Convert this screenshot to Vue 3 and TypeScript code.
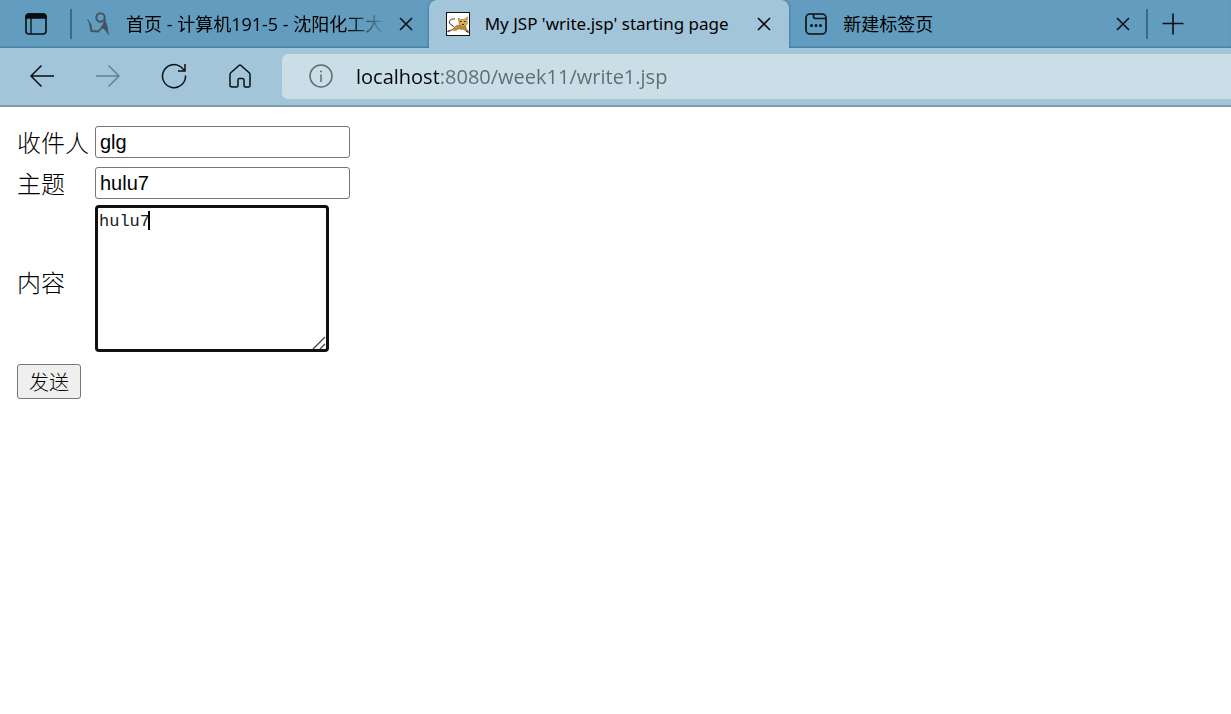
<script setup lang="ts">
import { ref } from 'vue'

const address = ref<string>('localhost:8080/week11/write1.jsp')
const recipient = ref<string>('glg')
const subject = ref<string>('hulu7')
const content = ref<string>('hulu7')
</script>

<template>
  <div class="browser">
    <header>
      <div class="tabs">
        <button class="icon-btn tab-menu" type="button" aria-label="Tab actions">
          <svg width="24" height="24" viewBox="0 0 24 24" fill="none" stroke="#0a0f14" stroke-width="1.6">
            <rect x="2" y="2" width="20" height="20" rx="3" />
            <path d="M2 6V5a3 3 0 0 1 3-3h14a3 3 0 0 1 3 3v1z" fill="#0a0f14" />
            <path d="M7 6v16" stroke-width="1.3" />
          </svg>
        </button>
        <span class="divider"></span>
        <div class="tab first">
          <svg class="favicon" width="24" height="26" viewBox="0 0 24 26" fill="none" stroke="#46535c">
            <circle cx="13.500" cy="6.500" r="4.200" stroke-width="2" />
            <path d="M.5 8.500l3.500 6" stroke-width="1.200" />
            <path d="M3 12.500l1.500 7.500 7.500.5" stroke-width="2" />
            <path d="M11 20.500C15 17.500 17 14 18.500 8.500" stroke-width="1.600" />
            <path d="M17.500 11c2.500 0 3 6 4 13-2-4-4-6.500-7.500-7.500 1.500-1.500 2.500-3 3.500-5.500z" fill="#46535c" stroke-width=".6" />
          </svg>
          <span class="title faded">首页 - 计算机191-5 - 沈阳化工大</span>
          <button class="icon-btn close" type="button" aria-label="Close tab">
            <svg width="14" height="14" viewBox="0 0 14 14" stroke="#0a0f14" stroke-width="1.6"><path d="M1 1l12 12M13 1L1 13" /></svg>
          </button>
        </div>
        <div class="tab active">
          <svg class="favicon" width="24" height="24" viewBox="0 0 24 24">
            <rect x=".5" y=".5" width="23" height="23" fill="#fff" stroke="#111" />
            <path d="M9 7C5 6.500 2.500 8.500 3.500 11s3.500 1.500 4 4" fill="none" stroke="#333" stroke-width="1" />
            <path d="M1.500 19.500l5-2.500 4-3.500 4-.5 5 1 1 3 2.500 2.500-1.500.5-4-2.500-5-.5-3 1.500-3-.5-4 2z" fill="#c4883a" stroke="#7c5622" stroke-width=".5" />
            <path d="M12 6l2.500 1.500h3.500L21.500 5l-.5 4.500.5 2-2 2.500-3 1-3-2-.5-3z" fill="#d9ac50" stroke="#7c5622" stroke-width=".5" />
            <path d="M14 9.500h1.500M18 9.500h1.500M16 12.500h2" stroke="#222" stroke-width="1" />
            <path d="M1.500 19.500l2-1M20 19l2.500 1.500" stroke="#222" fill="none" />
          </svg>
          <span class="title">My JSP 'write.jsp' starting page</span>
          <button class="icon-btn close" type="button" aria-label="Close tab">
            <svg width="14" height="14" viewBox="0 0 14 14" stroke="#0a0f14" stroke-width="1.6"><path d="M1 1l12 12M13 1L1 13" /></svg>
          </button>
        </div>
        <div class="tab last">
          <svg class="favicon" width="24" height="24" viewBox="0 0 24 24" fill="none" stroke="#0a0f14" stroke-width="1.6">
            <rect x="2" y="2" width="20" height="20" rx="4" />
            <path d="M9.500 2v2.500a2 2 0 0 0 2 2H22" />
            <g fill="#0a0f14" stroke="none"><circle cx="7.500" cy="13.500" r="1.500" /><circle cx="12" cy="13.500" r="1.500" /><circle cx="16.500" cy="13.500" r="1.500" /></g>
          </svg>
          <span class="title">新建标签页</span>
          <button class="icon-btn close" type="button" aria-label="Close tab">
            <svg width="14" height="14" viewBox="0 0 14 14" stroke="#0a0f14" stroke-width="1.6"><path d="M1 1l12 12M13 1L1 13" /></svg>
          </button>
        </div>
        <span class="divider"></span>
        <button class="icon-btn add" type="button" aria-label="New tab">
          <svg width="22" height="22" viewBox="0 0 22 22" stroke="#0a0f14" stroke-width="1.6"><path d="M11 .5v21M.5 10.500h21" /></svg>
        </button>
      </div>

      <div class="toolbar">
        <nav>
          <button class="icon-btn" type="button" aria-label="Back">
            <svg width="26" height="26" viewBox="0 0 26 26" fill="none" stroke="#0a0f14" stroke-width="1.5"><path d="M25 13H2M12.500 2.500L2 13l10.500 10.500" /></svg>
          </button>
          <button class="icon-btn" type="button" aria-label="Forward">
            <svg width="26" height="26" viewBox="0 0 26 26" fill="none" stroke="#668290" stroke-width="1.5"><path d="M1 13h23M13.500 2.500L24 13 13.500 23.500" /></svg>
          </button>
          <button class="icon-btn" type="button" aria-label="Refresh">
            <svg width="26" height="26" viewBox="0 0 26 26" fill="none" stroke="#0a0f14" stroke-width="1.5"><path d="M24.500 12.500A11.500 11.500 0 1 1 20 4l3.500 3.500M24 1v7h-7" /></svg>
          </button>
          <button class="icon-btn" type="button" aria-label="Home">
            <svg width="26" height="26" viewBox="0 0 26 26" fill="none" stroke="#0a0f14" stroke-width="1.500" stroke-linejoin="round"><path d="M3 11.500q0-1 .8-1.700L12 2.500q1-.8 2 0l8.200 7.300q.8.7.8 1.700V22.500q0 1.500-1.500 1.500h-3q-1.500 0-1.500-1.500V17q0-1.500-1.500-1.500h-3q-1.500 0-1.500 1.500v5.500q0 1.500-1.500 1.500h-4Q3 24 3 22.500z" /></svg>
          </button>
        </nav>
        <div class="address">
          <svg width="24" height="24" viewBox="0 0 24 24" fill="none" stroke="#5e6b73" stroke-width="1.500"><circle cx="12" cy="12" r="11" /><path d="M12 10.500V18" /><circle cx="12" cy="7.500" r="1" fill="#5e6b73" stroke="none" /></svg>
          <input v-model="address" type="text" aria-label="Address" spellcheck="false" />
        </div>
      </div>
    </header>

    <main>
      <form @submit.prevent>
        <table>
          <tbody>
            <tr>
              <th scope="row"><label for="recipient">收件人</label></th>
              <td><input id="recipient" v-model="recipient" class="field" type="text" /></td>
            </tr>
            <tr>
              <th scope="row"><label for="subject">主题</label></th>
              <td><input id="subject" v-model="subject" class="field" type="text" /></td>
            </tr>
            <tr class="content-row">
              <th scope="row"><label for="content">内容</label></th>
              <td>
                <div class="area">
                  <textarea id="content" v-model="content" spellcheck="false"></textarea>
                  <span class="caret"></span>
                  <svg class="grip" width="14" height="14" viewBox="0 0 14 14" stroke="#444" stroke-width="1.300"><path d="M1 13L13 1M8 13l5-5" /></svg>
                </div>
              </td>
            </tr>
          </tbody>
        </table>
        <button class="send" type="submit">发送</button>
      </form>
    </main>
  </div>
</template>

<style>
body {
  margin: 0;
  background: #fff;
}
</style>

<style scoped>
* {
  box-sizing: border-box;
}
.browser {
  color: #000;
  font-family: "Open Sans", "Noto Sans CJK SC", sans-serif;
}
.tabs {
  display: flex;
  align-items: center;
  height: 48px;
  background: #629dbf;
  box-shadow: inset 0 -2px 2px -1px #42759a;
}
.icon-btn {
  display: flex;
  align-items: center;
  justify-content: center;
  flex: none;
  margin: 0;
  padding: 0;
  border: 0;
  background: none;
}
.tab-menu {
  width: 70px;
  height: 48px;
  padding-left: 2px;
}
.divider {
  flex: none;
  width: 2px;
  height: 30px;
  background: #39698c;
}
.tab {
  display: flex;
  align-items: center;
  flex: 1 1 0;
  min-width: 0;
  height: 48px;
  padding: 0 16px;
  font-size: 18px;
  line-height: 24px;
}
.tab.first {
  padding-right: 14px;
  padding-left: 15px;
}
.tab.last {
  padding-right: 14px;
  padding-left: 15px;
}
.tab.active {
  padding-left: 17px;
  border-radius: 8px 8px 0 0;
  background: #a3c5da;
  box-shadow: 0 0 3px #2f628a;
  clip-path: inset(0 -4px 0 -4px);
  font-family: "Noto Sans", sans-serif;
  font-size: 17px;
}
.favicon {
  flex: none;
  margin-right: 15px;
}
.title {
  flex: 1;
  overflow: hidden;
  white-space: nowrap;
}
.faded {
  mask-image: linear-gradient(to right, #000 calc(100% - 36px), transparent);
}
.close {
  width: 18px;
  height: 24px;
  margin-left: 12px;
}
.add {
  width: 50px;
  height: 48px;
  margin-right: 33px;
}
.toolbar {
  display: flex;
  align-items: center;
  height: 59px;
  padding-bottom: 1px;
  border-bottom: 2px solid #7e9baf;
  background: #a3c5da;
}
nav {
  display: flex;
  gap: 40px;
  padding: 0 29px;
}
.address {
  display: flex;
  align-items: center;
  flex: 1;
  gap: 23px;
  height: 45px;
  padding-left: 27px;
  border-radius: 6px 0 0 6px;
  background: #cadee8;
}
.address svg {
  flex: none;
}
.address input {
  flex: 1;
  min-width: 0;
  height: 36px;
  padding: 0;
  border: 0;
  outline: 0;
  background: linear-gradient(to right, #05080a 83px, #5e6b73 83px);
  background-clip: text;
  color: transparent;
  font: 20px/30px "Open Sans", sans-serif;
}
main {
  padding: 15px 17px;
}
table {
  border-spacing: 0;
}
th {
  padding: 0 6px 2px 0;
  font-family: "Noto Sans CJK SC", sans-serif;
  font-size: 24px;
  font-weight: 300;
  line-height: 32px;
  text-align: left;
  white-space: nowrap;
}
td {
  padding: 4px 0 5px;
}
.content-row td {
  padding: 1px 0 9px;
}
.field {
  display: block;
  width: 255px;
  height: 32px;
  padding: 0 4px;
  border: 1px solid #767676;
  border-radius: 3px;
  background: #fff;
  font: 20px/28px "Liberation Sans", sans-serif;
}
.area {
  position: relative;
  width: 234px;
}
textarea {
  display: block;
  width: 100%;
  height: 147px;
  padding: 4px 1px;
  border: 3px solid #101010;
  border-radius: 4px;
  outline: 0;
  background: #fff;
  color: #222;
  resize: none;
  font: 17px/20px "Liberation Mono", monospace;
}
.caret {
  position: absolute;
  top: 6px;
  left: 53px;
  width: 2px;
  height: 19px;
  background: #000;
}
.grip {
  position: absolute;
  right: 3px;
  bottom: 2px;
}
.send {
  display: block;
  height: 35px;
  margin-top: 3px;
  padding: 0 11px;
  border: 1px solid #767676;
  border-radius: 3px;
  background: #efefef;
  color: #000;
  font: 300 20px/30px "Noto Sans CJK SC", sans-serif;
}
</style>
